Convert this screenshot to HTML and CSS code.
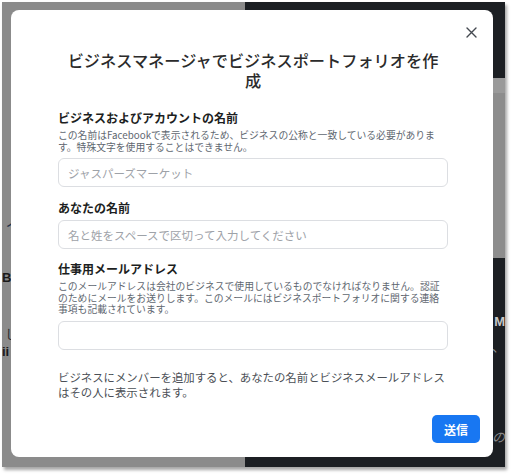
FILE: index.html
```html
<!DOCTYPE html>
<html lang="ja">
<head>
<meta charset="utf-8">
<link rel="stylesheet" href="styles.css">
</head>
<body>
<div class="screen">
  <div class="bg-left">
    <div class="frag f1">ノ</div>
    <div class="frag f2">Bu</div>
    <div class="frag f3">し</div>
    <div class="frag f4">ii</div>
  </div>
  <div class="bg-right">
    <div class="band"></div>
    <div class="rfrag r1">M</div>
    <div class="rfrag r2">、</div>
    <div class="rfrag r3">の</div>
  </div>

  <div class="modal">
    <button class="close" aria-label="閉じる">
      <svg width="11" height="11" viewBox="0 0 11 11"><path d="M1 1L10 10M10 1L1 10" stroke="#444950" stroke-width="1.4" stroke-linecap="round" fill="none"/></svg>
    </button>
    <div class="form">
      <h1 class="title">ビジネスマネージャでビジネスポートフォリオを作成</h1>

      <div class="field f-first">
        <div class="label">ビジネスおよびアカウントの名前</div>
        <div class="desc">この名前はFacebookで表示されるため、ビジネスの公称と一致している必要があります。特殊文字を使用することはできません。</div>
        <input class="input" type="text" placeholder="ジャスパーズマーケット">
      </div>

      <div class="field f-second">
        <div class="label">あなたの名前</div>
        <input class="input" type="text" placeholder="名と姓をスペースで区切って入力してください">
      </div>

      <div class="field f-third">
        <div class="label">仕事用メールアドレス</div>
        <div class="desc">このメールアドレスは会社のビジネスで使用しているものでなければなりません。認証のためにメールをお送りします。このメールにはビジネスポートフォリオに関する連絡事項も記載されています。</div>
        <input class="input" type="text">
      </div>

      <p class="note">ビジネスにメンバーを追加すると、あなたの名前とビジネスメールアドレスはその人に表示されます。</p>
    </div>
    <div class="actions">
      <button class="submit">送信</button>
    </div>
  </div>
</div>
</body>
</html>
```

FILE: styles.css
```css
* { box-sizing: border-box; }

html, body {
  margin: 0;
  padding: 0;
  background: #ffffff;
}

body {
  width: 512px;
  height: 475px;
  overflow: hidden;
  font-family: "Noto Sans CJK JP", "Noto Sans", sans-serif;
}

.screen {
  position: relative;
  margin: 2px 0 0 2px;
  width: 503px;
  height: 465px;
  display: grid;
  grid-template-columns: 243px 1fr;
  overflow: hidden;
  box-shadow: 2px 3px 3px rgba(0, 0, 0, 0.35);
}

.bg-left {
  background: #8b8b8b;
}

.frag {
  font-family: "Liberation Sans", "Noto Sans CJK JP", sans-serif;
  font-size: 13px;
  line-height: 16px;
  height: 16px;
  color: #1a1a1a;
  white-space: nowrap;
}
.f1 { margin-top: 212px; padding-left: 3px; color: #22334a; }
.f2 { margin-top: 40px; font-weight: bold; }
.f3 { margin-top: 41px; padding-left: 3px; color: #2a2a2a; }
.f4 { margin-top: 1px; font-weight: bold; padding-left: 0; }

.bg-right {
  background: #1c1f23;
  text-align: right;
}

.band {
  margin-top: 76px;
  height: 180px;
  background: linear-gradient(to bottom, #9a9a9a 0, #9a9a9a 15px, #8d8d8d 15px);
}

.rfrag {
  font-family: "Liberation Sans", "Noto Sans CJK JP", sans-serif;
  font-size: 13px;
  line-height: 16px;
  height: 16px;
  white-space: nowrap;
}
.r1 { margin-top: 56px; font-weight: bold; color: #c8c8c8; }
.r2 { margin-top: 9px; color: #9a9a9a; }
.r3 { margin-top: 75px; color: #8a8a8a; font-family: "Liberation Serif", "Noto Sans CJK JP", serif; font-style: italic; }

.modal {
  position: absolute;
  left: 9px;
  top: 8px;
  width: 482px;
  height: 447px;
  background: #ffffff;
  border-radius: 8px;
  padding: 40px 13px 14px 47px;
  display: flex;
  flex-direction: column;
}

.close {
  position: absolute;
  top: 17px;
  right: 16px;
  width: 11px;
  height: 11px;
  padding: 0;
  border: 0;
  background: none;
  display: flex;
}

.form {
  margin-right: 32px;
  display: flex;
  flex-direction: column;
}

.title {
  margin: 0;
  padding: 0 6px;
  font-size: 16.2px;
  line-height: 20px;
  font-weight: 500;
  color: #2b2b2b;
  text-align: center;
}

.field {
  display: flex;
  flex-direction: column;
}
.f-first { margin-top: 20px; }
.f-second { margin-top: 13px; }
.f-third { margin-top: 12px; }

.label {
  font-size: 12px;
  line-height: 16px;
  font-weight: 700;
  color: #1c1e21;
}

.desc {
  margin-top: 4px;
  font-size: 9.8px;
  line-height: 11.6px;
  color: #606770;
}

.input {
  margin-top: 5px;
  height: 29px;
  width: 100%;
  border: 1px solid #dcdee2;
  border-radius: 6px;
  padding: 0 9px;
  font-family: "Noto Sans CJK JP", "Noto Sans", sans-serif;
  font-size: 11.5px;
  color: #1c1e21;
  background: #ffffff;
  outline: none;
}
.f-second .input { margin-top: 4px; }
.input::placeholder { color: #9ea2a8; }

.note {
  margin: 20px 0 0;
  font-size: 11.4px;
  line-height: 15.5px;
  color: #4b4f56;
}

.actions {
  margin-top: auto;
  display: flex;
  justify-content: flex-end;
}

.submit {
  width: 48px;
  height: 28px;
  border: 0;
  border-radius: 5px;
  background: #1877f2;
  color: #ffffff;
  font-family: "Noto Sans CJK JP", "Noto Sans", sans-serif;
  font-size: 12px;
  font-weight: 700;
  padding: 0;
}
```
